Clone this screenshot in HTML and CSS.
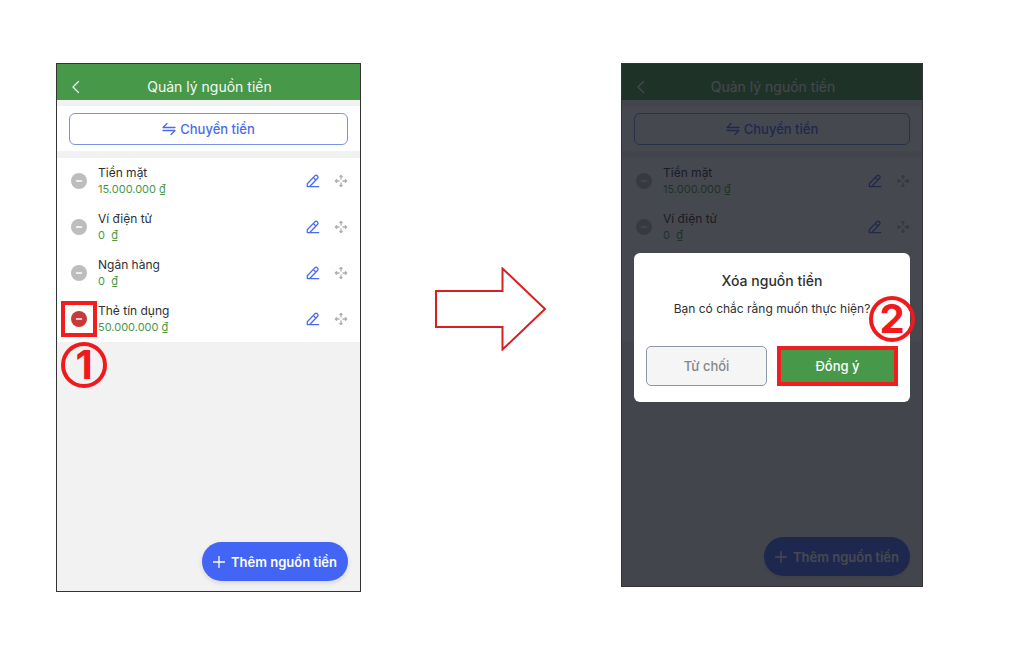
FILE: index.html
```html
<!DOCTYPE html>
<html lang="vi">
    <head>
        <meta charset="utf-8">
        <meta name="viewport" content="width=device-width, initial-scale=1">
        <title>Quản lý nguồn tiền</title>
        <link rel="stylesheet" href="styles.css">
    </head>
    <body>
        <svg class="sprite" aria-hidden="true">
            <symbol id="back" viewBox="0 0 14 14"><path d="M9.500 1.500 4 7l5.500 5.500"/></symbol>
            <symbol id="swap" viewBox="0 0 14 14"><path d="M13 5.500H1L5 1.500M1 8.500H13L9 12.500"/></symbol>
            <symbol id="minus" viewBox="0 0 16 16"><path d="M5.500 8h5"/></symbol>
            <symbol id="plus" viewBox="0 0 12 12"><path d="M6 .5v11M.5 6h11"/></symbol>
            <symbol id="pencil" viewBox="0 0 14 14"><path d="M1.300 12.600H12.700M1.300 12.600V9.700L8.800 1.900a1.800 1.800 0 0 1 2.600 2.600L4 12.300M7.300 3.500l2.600 2.600"/></symbol>
            <symbol id="move" viewBox="0 0 14 14"><path d="M7 5V1.500M5.800 2.600 7 1.400 8.200 2.600M7 9v3.500M5.800 11.400 7 12.600 8.200 11.400M5 7H1.500M2.600 5.800 1.400 7 2.600 8.200M9 7h3.500M11.400 5.800 12.600 7 11.400 8.200"/></symbol>
        </svg>

        <main class="guide">
            <section class="phone">
                <header class="topbar">
                    <button class="back" aria-label="Quay lại"><svg><use href="#back"/></svg></button>
                    <h1>Quản lý nguồn tiền</h1>
                </header>
                <div class="transfer">
                    <button class="transfer-button"><svg><use href="#swap"/></svg>Chuyển tiền</button>
                </div>
                <ul class="wallets">
                    <li>
                        <button class="remove" aria-label="Xóa"><svg><use href="#minus"/></svg></button>
                        <div class="info"><span class="name">Tiền mặt</span><span class="amount">15.000.000 ₫</span></div>
                        <button class="edit" aria-label="Sửa"><svg><use href="#pencil"/></svg></button>
                        <button class="move" aria-label="Di chuyển"><svg><use href="#move"/></svg></button>
                    </li>
                    <li>
                        <button class="remove" aria-label="Xóa"><svg><use href="#minus"/></svg></button>
                        <div class="info"><span class="name">Ví điện tử</span><span class="amount">0 &nbsp;₫</span></div>
                        <button class="edit" aria-label="Sửa"><svg><use href="#pencil"/></svg></button>
                        <button class="move" aria-label="Di chuyển"><svg><use href="#move"/></svg></button>
                    </li>
                    <li>
                        <button class="remove" aria-label="Xóa"><svg><use href="#minus"/></svg></button>
                        <div class="info"><span class="name">Ngân hàng</span><span class="amount">0 &nbsp;₫</span></div>
                        <button class="edit" aria-label="Sửa"><svg><use href="#pencil"/></svg></button>
                        <button class="move" aria-label="Di chuyển"><svg><use href="#move"/></svg></button>
                    </li>
                    <li>
                        <button class="remove active" aria-label="Xóa"><svg><use href="#minus"/></svg></button>
                        <div class="info"><span class="name">Thẻ tín dụng</span><span class="amount">50.000.000 ₫</span></div>
                        <button class="edit" aria-label="Sửa"><svg><use href="#pencil"/></svg></button>
                        <button class="move" aria-label="Di chuyển"><svg><use href="#move"/></svg></button>
                        <span class="step step-one">1</span>
                    </li>
                </ul>
                <button class="add"><svg><use href="#plus"/></svg>Thêm nguồn tiền</button>
            </section>

            <div class="arrow">
                <svg viewBox="0 0 112 84" aria-hidden="true"><path d="M1 24H67.500V1.500L110 42 67.500 82.500V60H1Z"/></svg>
            </div>

            <section class="phone">
                <header class="topbar">
                    <button class="back" aria-label="Quay lại"><svg><use href="#back"/></svg></button>
                    <h1>Quản lý nguồn tiền</h1>
                </header>
                <div class="transfer">
                    <button class="transfer-button"><svg><use href="#swap"/></svg>Chuyển tiền</button>
                </div>
                <ul class="wallets wallets-behind">
                    <li>
                        <button class="remove" aria-label="Xóa"><svg><use href="#minus"/></svg></button>
                        <div class="info"><span class="name">Tiền mặt</span><span class="amount">15.000.000 ₫</span></div>
                        <button class="edit" aria-label="Sửa"><svg><use href="#pencil"/></svg></button>
                        <button class="move" aria-label="Di chuyển"><svg><use href="#move"/></svg></button>
                    </li>
                    <li>
                        <button class="remove" aria-label="Xóa"><svg><use href="#minus"/></svg></button>
                        <div class="info"><span class="name">Ví điện tử</span><span class="amount">0 &nbsp;₫</span></div>
                        <button class="edit" aria-label="Sửa"><svg><use href="#pencil"/></svg></button>
                        <button class="move" aria-label="Di chuyển"><svg><use href="#move"/></svg></button>
                    </li>
                </ul>
                <button class="add"><svg><use href="#plus"/></svg>Thêm nguồn tiền</button>

                <div class="overlay">
                    <div class="dialog" role="dialog" aria-labelledby="dialog-title">
                        <h2 id="dialog-title">Xóa nguồn tiền</h2>
                        <p>Bạn có chắc rằng muốn thực hiện?</p>
                        <div class="actions">
                            <button class="reject">Từ chối</button>
                            <button class="accept">Đồng ý</button>
                        </div>
                        <span class="step step-two">2</span>
                    </div>
                </div>
            </section>
        </main>
    </body>
</html>
```
FILE: styles.css
```css
* {
    box-sizing: border-box;
}

body {
    margin: 0;
    background-color: #fff;
    color: #2e3033;
    font-family: Inter, "Liberation Sans", sans-serif;
    font-size: 13px;
    line-height: 16px;
}

button {
    display: flex;
    align-items: center;
    justify-content: center;
    padding: 0;
    border: 0;
    background: none;
    color: inherit;
    font: inherit;
    cursor: pointer;
}

svg {
    width: 14px;
    height: 14px;
    fill: none;
    stroke: currentColor;
    stroke-width: 1.3;
    stroke-linecap: round;
    stroke-linejoin: round;
}

.sprite {
    position: absolute;
    width: 0;
    height: 0;
}

.guide {
    display: grid;
    grid-template-columns: 305fr 112fr 302fr;
    gap: 74px;
    align-items: start;
    padding: 63px 101px 40px 56px;
}

/* phone screen */
.phone {
    position: relative;
    display: flex;
    flex-direction: column;
    aspect-ratio: 303 / 526;
    border: 1px solid #333;
    background-color: #f2f2f2;
}

.topbar {
    display: grid;
    grid-template-columns: 14px 1fr 12px;
    align-items: center;
    padding: 15px 12px 5px;
    background-color: #479849;
    color: #f4faf4;
}

.topbar h1 {
    margin: 0;
    font-size: 14px;
    font-weight: 400;
    line-height: 16px;
    text-align: center;
}

.transfer {
    margin: 6px 0 7px;
    padding: 7px 12px 6px;
    background-color: #fff;
}

.transfer-button {
    gap: 4px;
    width: 100%;
    height: 32px;
    border: 1px solid #7893e0;
    border-radius: 6px;
    color: #4a6af0;
    font-weight: 500;
}

.wallets {
    margin: 0;
    padding: 0;
    list-style: none;
    background-color: #fff;
}

.wallets li {
    position: relative;
    display: flex;
    align-items: center;
    height: 46px;
    padding: 0 12px 0 14px;
}

.wallets-behind {
    padding-bottom: 92px;
}

.remove {
    position: relative;
    width: 16px;
    height: 16px;
    border-radius: 50%;
    background-color: #bdbdbd;
    color: #fff;
}

.remove svg {
    width: 16px;
    height: 16px;
    stroke-width: 1.5;
}

.remove.active {
    background-color: #c73a36;
}

.remove.active::after {
    content: "";
    position: absolute;
    inset: -10px;
    border: 4px solid #f21d1f;
}

.info {
    display: flex;
    flex-direction: column;
    flex-grow: 1;
    margin-left: 11px;
}

.name {
    font-size: 12px;
}

.amount {
    color: #479849;
    font-size: 11px;
}

.edit {
    margin-right: 14px;
    color: #4a6af0;
}

.move {
    color: #adadad;
}

.add {
    gap: 6px;
    align-self: flex-end;
    height: 39px;
    margin: auto 12px 10px 0;
    padding: 0 11px;
    border-radius: 20px;
    background-color: #4265f5;
    box-shadow: 0 2px 5px rgba(0, 0, 0, .12);
    color: #fff;
    font-weight: 600;
}

.add svg {
    width: 12px;
    height: 12px;
}

.arrow {
    align-self: center;
    padding-bottom: 38px;
}

.arrow svg {
    display: block;
    width: 100%;
    height: auto;
    stroke: #d82020;
    stroke-width: 2;
    stroke-linejoin: miter;
}

/* confirm dialog */
.overlay {
    position: absolute;
    inset: 0;
    display: flex;
    align-items: center;
    padding: 5px 12px 0;
    background-color: rgba(20, 23, 32, .79);
}

.dialog {
    position: relative;
    flex-grow: 1;
    padding: 20px 12px 16px;
    border-radius: 6px;
    background-color: #fff;
    text-align: center;
}

.dialog h2 {
    margin: 0 0 12px;
    font-size: 14px;
    font-weight: 500;
    line-height: 16px;
}

.dialog p {
    margin: 0 0 29px;
    font-size: 12px;
}

.actions {
    display: grid;
    grid-template-columns: 1fr 1fr;
    gap: 10px;
}

.actions button {
    height: 40px;
    font-weight: 500;
}

.actions .reject {
    border: 1px solid #8e97a5;
    border-radius: 5px;
    background-color: #f5f5f5;
    color: #86878b;
}

.actions .accept {
    border: 4px solid #f21d1f;
    background-color: #479849;
    color: #fff;
}

/* numbered step marks */
.step {
    position: absolute;
    display: flex;
    align-items: center;
    justify-content: center;
    width: 46px;
    height: 46px;
    border: 4px solid #f01a1c;
    border-radius: 50%;
    color: #f01a1c;
    font-size: 40px;
    font-weight: 700;
    line-height: 40px;
}

.step-one {
    top: 46px;
    left: 4px;
}

.step-two {
    top: 43px;
    right: -5px;
}
```
